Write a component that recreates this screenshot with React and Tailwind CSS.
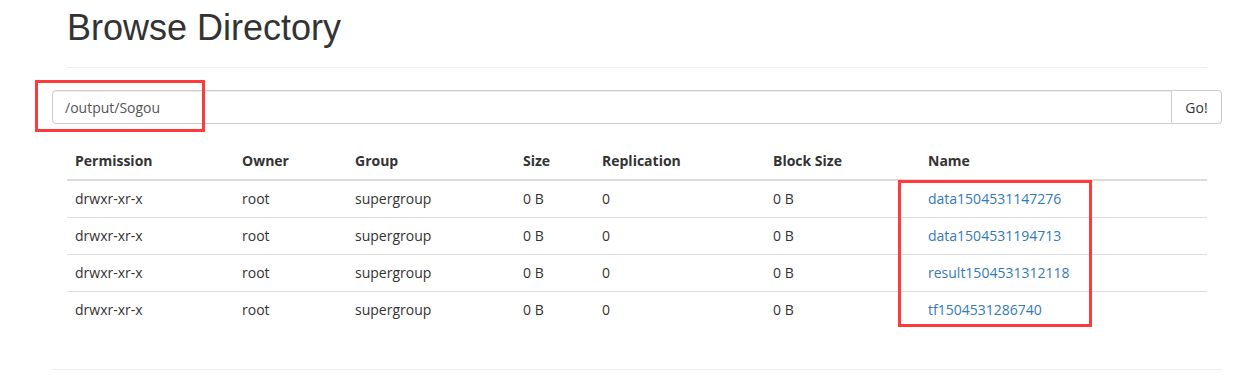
import React from "react";

const rows = [
  ["drwxr-xr-x", "root", "supergroup", "0 B", "0", "0 B", "data1504531147276"],
  ["drwxr-xr-x", "root", "supergroup", "0 B", "0", "0 B", "data1504531194713"],
  ["drwxr-xr-x", "root", "supergroup", "0 B", "0", "0 B", "result1504531312118"],
  ["drwxr-xr-x", "root", "supergroup", "0 B", "0", "0 B", "tf1504531286740"],
];

const headers = ["Permission", "Owner", "Group", "Size", "Replication", "Block Size", "Name"];
const cols = "grid grid-cols-[167px_113px_168px_79px_171px_155px_287px]";

export default function App() {
  return (
    <div
      className="relative w-[1248px] h-[381px] overflow-hidden bg-white text-[#333] text-[14px]"
      style={{ fontFamily: '"Open Sans", "Noto Sans CJK SC", sans-serif' }}
    >
      <div className="ml-[52px] w-[1170px]">
        <div className="mx-[15px] pt-[8px] pb-[19px] border-b border-[#eee]">
          <h1
            className="text-[36px] leading-[40px] text-[#333] font-normal"
            style={{ fontFamily: '"Liberation Sans", Arial, sans-serif' }}
          >
            Browse Directory
          </h1>
        </div>

        <div className="mt-[22px] flex h-[34px]">
          <div className="flex-1 flex items-center pl-[12px] border border-[#ccc] rounded-l-[4px] text-[#555] shadow-[inset_0_1px_1px_rgba(0,0,0,0.075)]">
            /output/Sogou
          </div>
          <div className="w-[50px] flex items-center justify-center border border-l-0 border-[#ccc] rounded-r-[4px] bg-white text-[#333]">
            Go!
          </div>
        </div>

        <div className="relative mx-[15px] mt-[19px]">
          <div className={`${cols} border-b-2 border-[#ddd] font-bold`}>
            {headers.map((h) => (
              <div key={h} className="px-[8px] py-[8px] leading-[20px]">
                {h}
              </div>
            ))}
          </div>
          {rows.map((r, i) => (
            <div key={i} className={`${cols} ${i > 0 ? "border-t border-[#ddd]" : ""}`}>
              {r.map((c, j) => (
                <div
                  key={j}
                  className={`px-[8px] py-[8px] leading-[20px] ${j === 6 ? "text-[#337ab7]" : ""}`}
                >
                  {c}
                </div>
              ))}
            </div>
          ))}
          <div className="absolute left-[831px] top-[37px] w-[194px] h-[147px] border-[3px] border-[#fd3b3b]" />
        </div>

        <div className="mt-[41px] border-t border-[#eee]" />
      </div>

      <div className="absolute left-[35px] top-[80px] w-[170px] h-[52px] border-[3px] border-[#fd3b3b]" />
    </div>
  );
}
